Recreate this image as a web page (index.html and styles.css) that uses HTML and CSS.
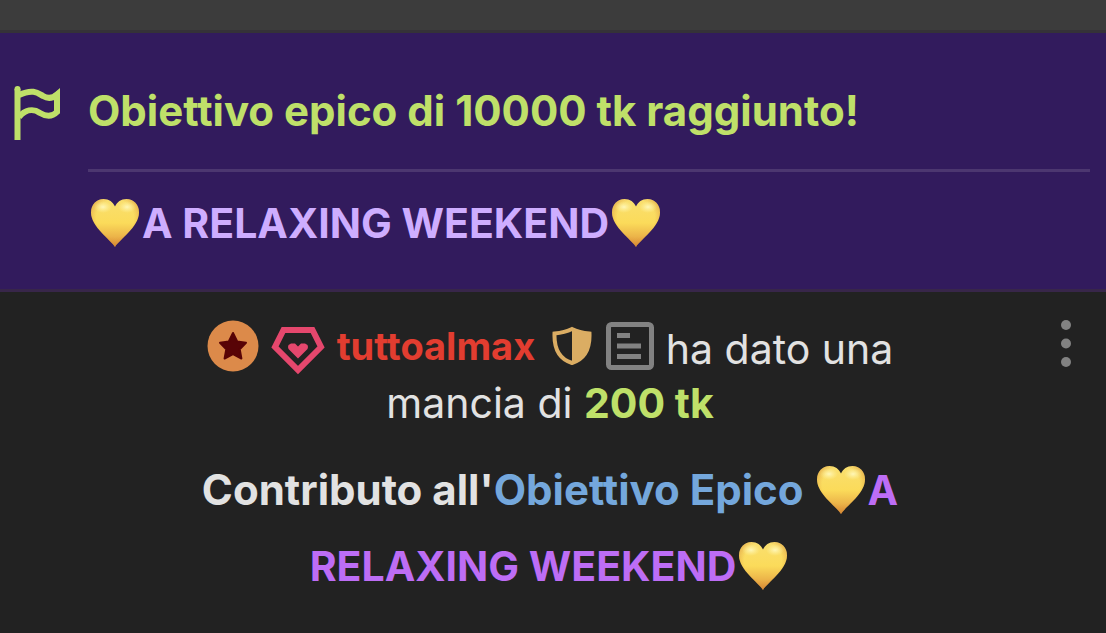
FILE: index.html
```html
<!DOCTYPE html>
<html lang="it">
<head>
<meta charset="utf-8">
<meta name="viewport" content="width=device-width, initial-scale=1">
<title>Chat</title>
<link rel="stylesheet" href="styles.css">
</head>
<body>
<svg width="0" height="0" class="defs" aria-hidden="true">
  <defs>
    <linearGradient id="gold" x1="0" y1="0" x2="0" y2="1">
      <stop offset="0" stop-color="#f9df70"/>
      <stop offset="0.5" stop-color="#fbdb5a"/>
      <stop offset="1" stop-color="#e0963c"/>
    </linearGradient>
    <radialGradient id="edge" cx="0.5" cy="0.4" r="0.65">
      <stop offset="0.6" stop-color="#d98a30" stop-opacity="0"/>
      <stop offset="1" stop-color="#c9782c" stop-opacity="0.7"/>
    </radialGradient>
    <radialGradient id="shine">
      <stop offset="0" stop-color="#fff9c0" stop-opacity="0.9"/>
      <stop offset="1" stop-color="#fff3a0" stop-opacity="0"/>
    </radialGradient>
    <symbol id="heart" viewBox="0 0 50 50">
      <path d="M25 49C21 42 1 29 1 14.500C1 6.500 6.500 1 13.500 1C19 1 23 4 25 8.500C27 4 31 1 36.500 1C43.500 1 49 6.500 49 14.500C49 29 29 42 25 49Z" fill="url(#gold)"/>
      <path d="M25 49C21 42 1 29 1 14.500C1 6.500 6.500 1 13.500 1C19 1 23 4 25 8.500C27 4 31 1 36.500 1C43.500 1 49 6.500 49 14.500C49 29 29 42 25 49Z" fill="url(#edge)"/>
      <ellipse cx="13" cy="9" rx="9" ry="6" fill="url(#shine)"/>
      <ellipse cx="37" cy="9" rx="9" ry="6" fill="url(#shine)"/>
    </symbol>
  </defs>
</svg>
<div class="topbar"></div>
<section class="goal">
  <svg class="flag" viewBox="0 0 48 56" aria-hidden="true">
    <path d="M3.500 4V55" fill="none" stroke="#bfe069" stroke-width="6"/>
    <circle cx="3.500" cy="4" r="3" fill="#bfe069"/>
    <path d="M5 10C20 3 25 9 29 11C34 14 39 13 43 9.500V27C37 33 31 31 26 28C19 23 11 25 5 32" fill="none" stroke="#bfe069" stroke-width="6"/>
    <path d="M39 9L46 4V14Z" fill="#bfe069"/>
  </svg>
  <div class="goal-body">
    <h1 class="goal-title">Obiettivo epico di 10000 tk raggiunto!</h1>
    <p class="goal-name"><svg class="heart"><use href="#heart"/></svg>A RELAXING WEEKEND<svg class="heart"><use href="#heart"/></svg></p>
  </div>
</section>
<article class="message">
  <div class="content">
    <p class="tip">
      <span class="sender"><svg class="star" viewBox="0 0 52 52" aria-hidden="true"><circle cx="26" cy="26" r="25.500" fill="#dc8a4a"/><path d="M26 13L30.200 21.500L39 22.700L32.700 29.200L34.400 38.500L26 34.200L17.600 38.500L19.300 29.200L13 22.700L21.800 21.500Z" fill="#580406" stroke="#580406" stroke-width="2" stroke-linejoin="round"/></svg><svg class="gem" viewBox="0 0 54 60" aria-hidden="true"><path d="M12.500 14H41.500L50 31L27 54L4 31Z" fill="none" stroke="#e5476d" stroke-width="6"/><path d="M27 42.500L17.500 33Q16.500 31 17.500 29L20 27.500H24L27 30.500L30 27.500H34L36.500 29Q37.500 31 36.500 33Z" fill="#e5476d"/></svg><strong class="user">tuttoalmax</strong><svg class="shield" viewBox="0 0 40 40" aria-hidden="true"><path d="M20 3C15 5.500 8 7 2.500 7.500C2 22 7 33 20 37C33 33 38 22 37.500 7.500C32 7 25 5.500 20 3Z" fill="none" stroke="#dbad63" stroke-width="4"/><path d="M20 3V37C33 33 38 22 37.500 7.500C32 7 25 5.500 20 3Z" fill="#dbad63"/></svg><svg class="note" viewBox="0 0 48 48" aria-hidden="true"><rect x="2.500" y="2.500" width="43" height="43" rx="3" fill="none" stroke="#828282" stroke-width="5"/><path d="M11 13.500H24M11 24H35M11 34.500H35" stroke="#828282" stroke-width="5"/></svg></span>
      ha dato una mancia di <strong class="amount">200 tk</strong>
    </p>
    <p class="contrib">Contributo all'<a class="goal-link" href="#">Obiettivo Epico</a> <span class="goal-label"><svg class="heart"><use href="#heart"/></svg>A RELAXING WEEKEND<svg class="heart"><use href="#heart"/></svg></span></p>
  </div>
  <button class="menu" type="button" aria-label="Menu"><svg class="dots" viewBox="0 0 12 48" aria-hidden="true"><g fill="#828282"><circle cx="6" cy="5" r="5"/><circle cx="6" cy="23.500" r="5"/><circle cx="6" cy="42" r="5"/></g></svg></button>
</article>
</body>
</html>
```
FILE: styles.css
```css
* { box-sizing: border-box; }
body {
  margin: 0;
  background: #222222;
  color: #e2e2e2;
  font-family: Inter, "Liberation Sans", sans-serif;
  font-size: 41px;
}
p, h1 { margin: 0; }
.defs { position: absolute; }
.topbar {
  height: 33px;
  background: #3c3c3c;
  border-bottom: 3px solid #353238;
}
.goal {
  display: flex;
  align-items: flex-start;
  gap: 26px;
  padding: 52px 16px 38px 14px;
  background: #321b5d;
  border-bottom: 3px solid #38264a;
}
.flag { width: 48px; height: 56px; flex: none; }
.goal-body { flex: 1; }
.goal-title {
  padding-bottom: 32px;
  border-bottom: 3px solid #4c3770;
  color: #bfe069;
  font-size: 42px;
  font-weight: 650;
  line-height: 52px;
}
.goal-name {
  padding-top: 24px;
  color: #ceadff;
  font-weight: 700;
  line-height: 55px;
}
.heart {
  width: 50px;
  height: 50px;
  margin: 0 2px;
  vertical-align: -10px;
}
.message {
  display: grid;
  grid-template-columns: 1fr minmax(0, 704px) 1fr;
  padding: 28px 6px 28px 0;
}
.content { grid-column: 2; text-align: center; }
.tip { line-height: 54px; }
.sender {
  display: inline-flex;
  align-items: center;
  height: 52px;
  vertical-align: -8px;
}
.star { width: 52px; height: 52px; margin-right: 12px; }
.gem { width: 54px; height: 60px; margin-right: 12px; }
.user { color: #e23d30; font-size: 38px; font-weight: 700; line-height: 54px; }
.shield { width: 40px; height: 40px; margin: 0 14px 0 17px; }
.note { width: 48px; height: 48px; }
.amount { color: #bfe069; font-weight: 700; }
.contrib {
  padding-top: 22px;
  font-size: 42px;
  font-weight: 650;
  line-height: 75px;
}
.goal-link { color: #74a7dc; text-decoration: none; }
.goal-label { color: #bd6df5; font-size: 41px; font-weight: 700; }
.menu {
  justify-self: end;
  align-self: start;
  margin-right: 28px;
  padding: 0;
  border: 0;
  background: none;
}
.dots { display: block; width: 12px; height: 48px; }
```
